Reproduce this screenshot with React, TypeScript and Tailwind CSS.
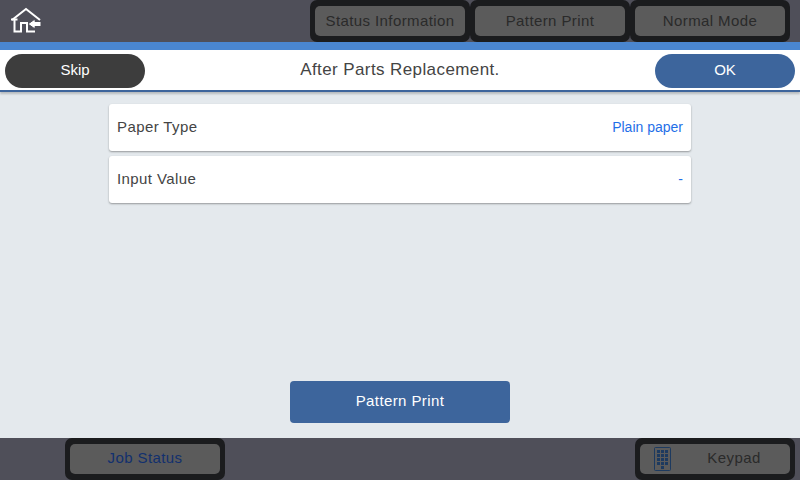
import React from "react";

const font = { fontFamily: '"Liberation Sans", Arial, sans-serif' };

const FrameButton = ({
  label,
  className = "",
  children,
}: {
  label: string;
  className?: string;
  children?: React.ReactNode;
}) => (
  <div className="w-[160px] h-[42px] bg-[#1b1c1e] rounded-[7px] px-[5px] py-[6px]">
    <div
      className={`relative h-[30px] rounded-[5px] bg-[#5b5b5b] flex items-center justify-center text-[15px] leading-[28px] tracking-[0.4px] ${className}`}
    >
      {children}
      {label}
    </div>
  </div>
);

const HomeIcon = () => (
  <svg width="32" height="26" viewBox="0 0 32 26" fill="none">
    <path
      d="M7.5 12.5 L4.5 12.5 L4.5 24.5 L11 24.5 L11 16 L17 16 L17 24.5 L25 24.5"
      stroke="#fff"
      strokeWidth="2"
    />
    <path d="M2 13 L16 2 L30 13 " stroke="#fff" strokeWidth="2" />
    <path d="M1 12.5 L5 12.5" stroke="#fff" strokeWidth="2" />
    <path d="M18 17 L25 12 L25 14.5 L31 14.5 L31 19.5 L25 19.5 L25 22 Z" fill="#fff" stroke="#4f4f59" strokeWidth="1" />
  </svg>
);

const KeypadIcon = () => (
  <svg width="18" height="24" viewBox="0 0 18 24" className="absolute left-[14px] top-[3px]">
    <rect x="0.5" y="0.5" width="16" height="23" rx="1" fill="none" stroke="#1d3a5f" strokeWidth="1" />
    {[3, 7, 11, 15].flatMap((y) =>
      [3, 7, 11].map((x) => <rect key={`${y}-${x}`} x={x} y={y} width="3" height="3" fill="#1d3a5f" />),
    )}
    <rect x="7" y="19" width="3" height="3" fill="#1d3a5f" />
  </svg>
);

const Row = ({ label, value }: { label: string; value: string }) => (
  <div className="h-[47px] bg-white rounded-[3px] shadow-[0_1px_2px_rgba(0,0,0,0.35)] flex items-center justify-between pl-[8px] pr-[8px]">
    <span className="text-[15px] tracking-[0.4px] text-[#444]">{label}</span>
    <span className="text-[14px] text-[#1f6fe8]">{value}</span>
  </div>
);

export default function App() {
  return (
    <div className="w-[800px] h-[480px] flex flex-col overflow-hidden bg-[#e4e9ed]" style={font}>
      <header className="h-[42px] bg-[#4f4f59] flex items-start pl-[10px] pr-[10px]">
        <div className="pt-[7px]">
          <HomeIcon />
        </div>
        <div className="ml-auto flex text-[#2a2a2a]">
          <FrameButton label="Status Information" />
          <FrameButton label="Pattern Print" />
          <FrameButton label="Normal Mode" />
        </div>
      </header>

      <div className="h-[8px] bg-[#4a86d0]" />

      <div className="h-[42px] bg-white border-b-[2px] border-[#3d659c] shadow-[0_2px_2px_rgba(0,0,0,0.2)] flex items-start justify-between px-[5px] pt-[4px]">
        <button className="w-[140px] h-[34px] rounded-full bg-[#3d3d3d] text-white text-[15px] pb-[2px]">
          Skip
        </button>
        <span className="text-[17px] leading-[32px] tracking-[0.4px] text-[#444]">After Parts Replacement.</span>
        <button className="w-[140px] h-[34px] rounded-full bg-[#3d659c] text-white text-[15px] pb-[2px]">
          OK
        </button>
      </div>

      <main className="flex-1 flex flex-col items-center pt-[12px]">
        <div className="w-[582px] flex flex-col gap-[5px]">
          <Row label="Paper Type" value="Plain paper" />
          <Row label="Input Value" value="-" />
        </div>
        <button className="mt-auto mb-[15px] w-[220px] h-[42px] rounded-[4px] bg-[#3d659c] text-white text-[15px] tracking-[0.4px] pb-[2px]">
          Pattern Print
        </button>
      </main>

      <footer className="h-[42px] bg-[#4f4f59] flex justify-between pl-[65px] pr-[5px]">
        <FrameButton label="Job Status" className="text-[#12306e] pb-[2px]" />
        <div className="text-[#2a2a2a]">
          <FrameButton label="Keypad" className="pl-[38px] pb-[2px]">
            <KeypadIcon />
          </FrameButton>
        </div>
      </footer>
    </div>
  );
}
